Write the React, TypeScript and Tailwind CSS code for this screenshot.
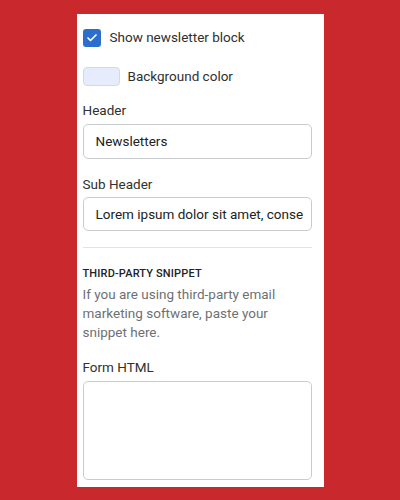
import { Check } from 'lucide-react'

const font = { fontFamily: 'Roboto, "Noto Sans", sans-serif' }

export default function App() {
  return (
    <div className="h-[500px] w-[400px] bg-[#c9292c] pt-[14px] overflow-hidden" style={font}>
      <div className="mx-auto h-[473px] w-[247px] bg-white pl-[6px] pr-[12px] pt-[15px] text-[13.5px] text-[#202223]">
        {/* Toggle */}
        <label className="flex items-center gap-[9px] h-[18px]">
          <span className="flex h-[18px] w-[18px] items-center justify-center rounded-[3px] bg-[#2c6ecb]">
            <Check className="h-[12px] w-[12px] text-white" strokeWidth={3.5} />
          </span>
          <span className="leading-none text-[#303030]">Show newsletter block</span>
        </label>

        {/* Color */}
        <div className="mt-[20px] flex items-center gap-[8px]">
          <span className="h-[19px] w-[37px] rounded-[4px] border border-[#d5d9e3] bg-[#e6ecfc]" />
          <span className="leading-none text-[#303030]">Background color</span>
        </div>

        {/* Header */}
        <div className="mt-[15px] leading-[19px] text-[#303030]">Header</div>
        <div className="mt-[4px] flex h-[35px] items-center rounded-[5px] border border-[#c9cccf] px-[12px] text-[#202223]">
          Newsletters
        </div>

        <div className="mt-[16px] leading-[19px] text-[#303030]">Sub Header</div>
        <div className="mt-[3px] flex h-[34px] items-center overflow-hidden whitespace-nowrap rounded-[5px] border border-[#c9cccf] pl-[12px] pr-[8px] text-[#202223]">
          <span className="overflow-hidden">Lorem ipsum dolor sit amet, consectetur</span>
        </div>

        <div className="mt-[16px] h-px bg-[#e1e3e5]" />

        <div className="mt-[18px] text-[11px] font-medium leading-[16px] tracking-[0.15px] text-[#202223]">
          THIRD-PARTY SNIPPET
        </div>
        <p className="mt-[3px] leading-[19px] text-[#6d7175]">
          If you are using third-party email marketing software, paste your snippet here.
        </p>

        <div className="mt-[16px] leading-[19px] text-[#303030]">Form HTML</div>
        <textarea className="mt-[4px] block h-[99px] w-full resize-none rounded-[5px] border border-[#c9cccf] outline-none" />
      </div>
    </div>
  )
}
